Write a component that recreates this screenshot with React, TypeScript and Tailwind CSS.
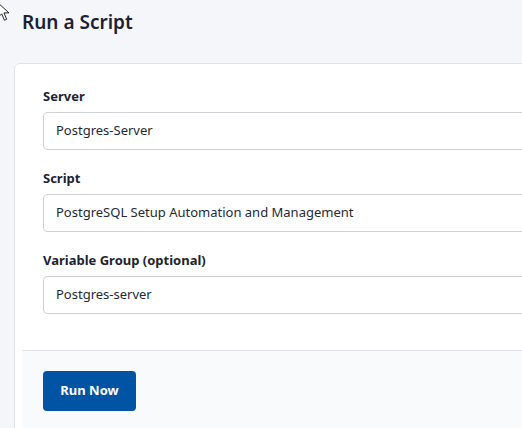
import React from "react";

const font = { fontFamily: '"Noto Sans", "Open Sans", Arial, sans-serif' };

function Field({ label, value }: { label: string; value: string }) {
  return (
    <div className="mb-[18px]">
      <label className="block text-[13px] font-bold leading-5 text-[#1c2331] mb-[6px]">
        {label}
      </label>
      <div className="h-[38px] w-[520px] rounded-[4px] border border-[#cdd1d6] bg-white px-3 flex items-center text-[13px] text-[#222a36]">
        {value}
      </div>
    </div>
  );
}

export default function App() {
  return (
    <div
      className="relative min-h-[428px] w-[522px] overflow-hidden bg-[#f5f6fa]"
      style={font}
    >
      <svg
        className="absolute left-[-3px] top-[2px]"
        width="13"
        height="20"
        viewBox="0 0 14 22"
      >
        <path
          d="M1 1 L1 17 L5 13 L8 20 L10.5 19 L7.5 12 L13 12 Z"
          fill="#fff"
          stroke="#111"
          strokeWidth="1"
          strokeLinejoin="round"
        />
      </svg>

      <h1 className="pl-[22px] pt-[8px] text-[19px] font-semibold leading-7 text-[#1a2233]">
        Run a Script
      </h1>

      <div className="ml-[14px] mt-[27px] w-[560px] rounded-[6px] border border-[#dfe2e7] bg-white">
        <div className="px-[28px] pt-[22px] pb-[18px]">
          <Field label="Server" value="Postgres-Server" />
          <Field label="Script" value="PostgreSQL Setup Automation and Management" />
          <Field label="Variable Group (optional)" value="Postgres-server" />
        </div>
        <div className="mx-[7px] border-t border-[#dfe2e7] bg-[#f9fafc] px-[21px] pt-[20px] pb-[20px]">
          <button className="h-[40px] w-[93px] rounded-[4px] bg-[#0153a4] text-[13px] font-bold text-white">
            Run Now
          </button>
        </div>
      </div>
    </div>
  );
}
